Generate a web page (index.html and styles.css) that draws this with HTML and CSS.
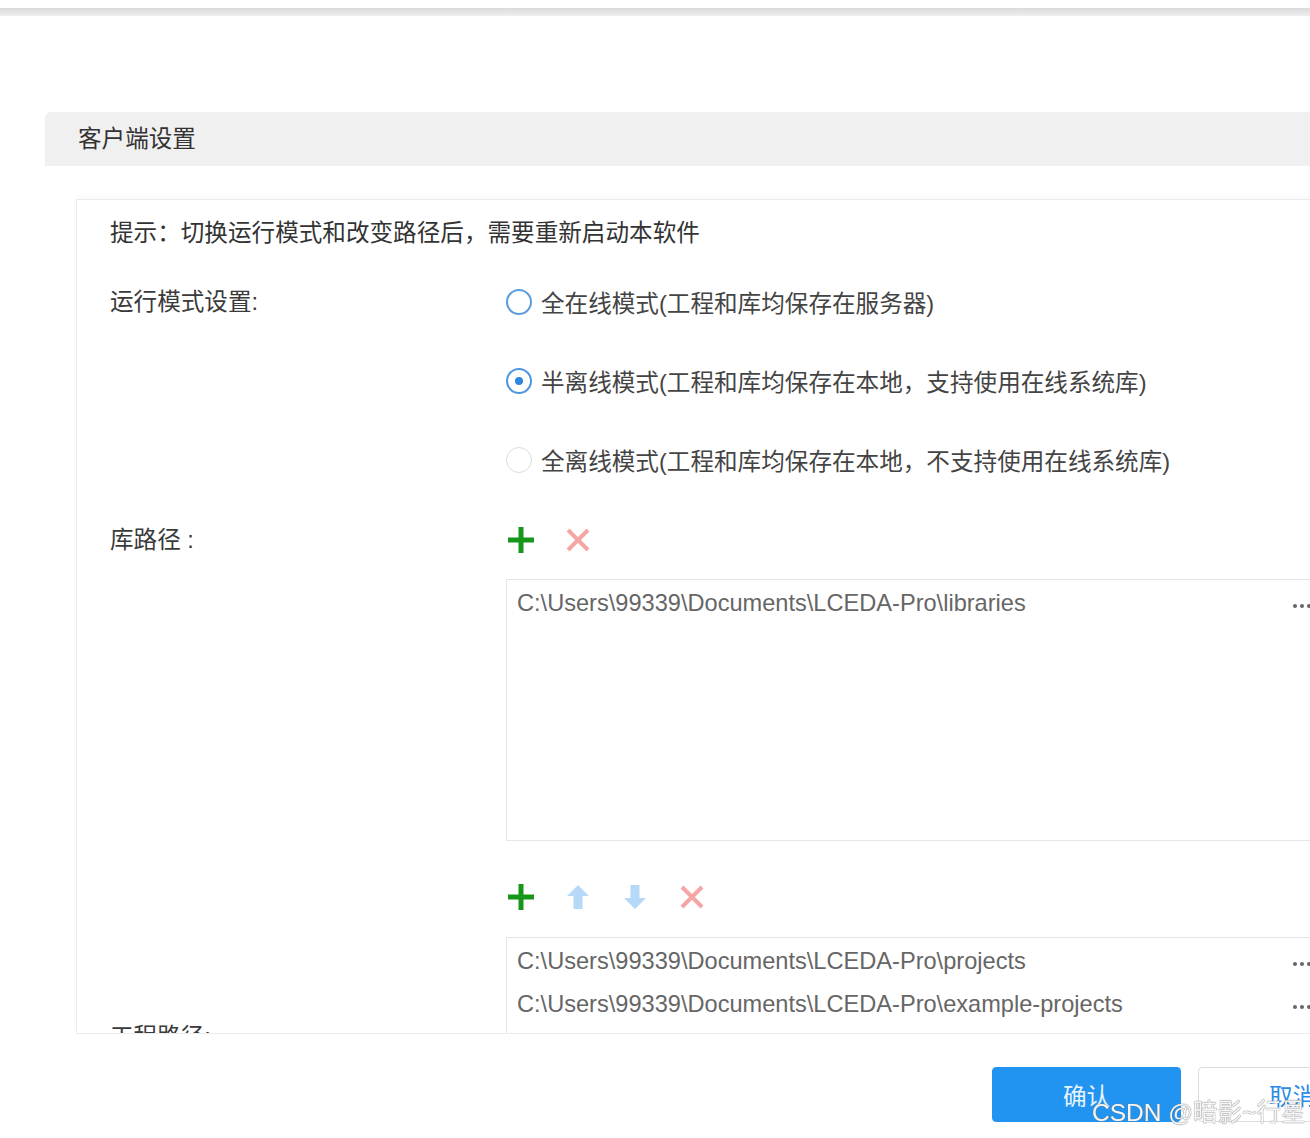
FILE: index.html
```html
<!DOCTYPE html>
<html lang="zh-CN">
<head>
<meta charset="utf-8">
<title>客户端设置</title>
<link rel="stylesheet" href="styles.css">
</head>
<body>
<div class="topbar"></div>

<div class="dialog">
  <div class="dialog-head">客户端设置</div>

  <div class="dialog-body">
    <div class="panel">
      <p class="hint">提示：切换运行模式和改变路径后，需要重新启动本软件</p>

      <div class="form-row row-mode">
        <div class="label">运行模式设置:</div>
        <div class="radios">
          <label class="radio"><span class="dot dot-hover"></span>全在线模式(工程和库均保存在服务器)</label>
          <label class="radio"><span class="dot dot-on"></span>半离线模式(工程和库均保存在本地，支持使用在线系统库)</label>
          <label class="radio"><span class="dot"></span>全离线模式(工程和库均保存在本地，不支持使用在线系统库)</label>
        </div>
      </div>

      <div class="form-row row-lib">
        <div class="label">库路径 :</div>
        <div>
          <div class="tools">
            <span class="tool"><svg width="28" height="28" viewBox="0 0 28 28"><path d="M14 1V27M1 14H27" stroke="#17961a" stroke-width="5"/></svg></span>
            <span class="tool"><svg width="28" height="28" viewBox="0 0 28 28"><path d="M4 4L24 24M24 4L4 24" stroke="#f5a5a5" stroke-width="4"/></svg></span>
          </div>
          <div class="paths paths-lib">
            <div class="path"><span>C:\Users\99339\Documents\LCEDA-Pro\libraries</span><span class="more"><i></i><i></i><i></i></span></div>
          </div>
        </div>
      </div>

      <div class="form-row row-proj">
        <div class="label label-proj">工程路径:</div>
        <div>
          <div class="tools">
            <span class="tool"><svg width="28" height="28" viewBox="0 0 28 28"><path d="M14 1V27M1 14H27" stroke="#17961a" stroke-width="5"/></svg></span>
            <span class="tool"><svg width="28" height="28" viewBox="0 0 28 28"><path d="M14 2L25 13H18.5V26H9.5V13H3Z" fill="#b6d9f8"/></svg></span>
            <span class="tool"><svg width="28" height="28" viewBox="0 0 28 28"><path d="M14 26L25 15H18.5V2H9.5V15H3Z" fill="#b6d9f8"/></svg></span>
            <span class="tool"><svg width="28" height="28" viewBox="0 0 28 28"><path d="M4 4L24 24M24 4L4 24" stroke="#f5a5a5" stroke-width="4"/></svg></span>
          </div>
          <div class="paths paths-proj">
            <div class="path"><span>C:\Users\99339\Documents\LCEDA-Pro\projects</span><span class="more"><i></i><i></i><i></i></span></div>
            <div class="path"><span>C:\Users\99339\Documents\LCEDA-Pro\example-projects</span><span class="more"><i></i><i></i><i></i></span></div>
          </div>
        </div>
      </div>
    </div>
  </div>

  <div class="dialog-foot">
    <button class="btn btn-ok">确认</button>
    <button class="btn btn-cancel">取消</button>
  </div>
</div>

<div class="watermark">CSDN @暗影~行星</div>
</body>
</html>
```

FILE: styles.css
```css
body {
	margin: 0;
	background-color: #fff;
	font-family: "Liberation Sans", "Noto Sans CJK SC", sans-serif;
	font-size: 23.6px;
	color: #333;
	overflow: hidden;
	}
.topbar {
	height: 8px;
	margin-top: 8px;
	background: linear-gradient(#dadada, #efefef);
	}
.dialog {
	width: 1400px;
	margin: 96px 0 0 45px;
	}
.dialog-head {
	height: 54px;
	line-height: 54px;
	padding-left: 33px;
	background-color: #f0f0f0;
	border-radius: 6px 0 0 0;
	color: #333;
	}
.dialog-body {
	padding: 33px 0 0 31px;
	}
.panel {
	box-sizing: border-box;
	height: 835px;
	overflow: hidden;
	padding-left: 33px;
	border: 1px solid #ececec;
	box-shadow: 0 -3px 5px rgba(0, 0, 0, 0.025);
	}
.hint {
	margin: 16px 0 0 0;
	line-height: 34px;
	}
.form-row {
	display: grid;
	grid-template-columns: 396px 1fr;
	}
.label {
	line-height: 34px;
	color: #3a3a3a;
	}
.row-mode {
	margin-top: 35px;
	}
.row-lib {
	margin-top: 46px;
	}
.row-proj {
	margin-top: 39px;
	}
.label-proj {
	padding-top: 140px;
	}
.radios {
	display: flex;
	flex-direction: column;
	gap: 45px;
	}
.radio {
	display: flex;
	align-items: center;
	gap: 9px;
	height: 34px;
	color: #444;
	}
.dot {
	box-sizing: border-box;
	width: 26px;
	height: 26px;
	border-radius: 50%;
	border: 1.5px solid #dadada;
	display: flex;
	align-items: center;
	justify-content: center;
	}
.dot-hover {
	border: 2px solid #5b9ce0;
	}
.dot-on {
	border: 2px solid #4d96e2;
	}
.dot-on::after {
	content: "";
	width: 8px;
	height: 8px;
	border-radius: 50%;
	background-color: #2f86e0;
	}
.tools {
	display: flex;
	gap: 29px;
	height: 34px;
	align-items: center;
	padding-left: 1px;
	}
.tool svg {
	display: block;
	}
.paths {
	box-sizing: border-box;
	width: 820px;
	margin-top: 22px;
	padding: 2px 0 0 10px;
	border: 1px solid #e6e6e6;
	color: #666;
	}
.paths-lib {
	height: 262px;
	}
.paths-proj {
	margin-top: 23px;
	height: 240px;
	}
.path {
	display: flex;
	justify-content: space-between;
	align-items: center;
	line-height: 43px;
	}
.more {
	display: flex;
	gap: 3px;
	width: 32px;
	padding-top: 4px;
	}
.more i {
	width: 4px;
	height: 4px;
	border-radius: 50%;
	background-color: #666;
	}
.dialog-foot {
	display: flex;
	gap: 17px;
	padding: 33px 0 0 947px;
	}
.btn {
	width: 189px;
	height: 55px;
	border-radius: 4px;
	font-family: "Liberation Sans", "Noto Sans CJK SC", sans-serif;
	font-size: 23.6px;
	}
.btn-ok {
	background-color: #2194f2;
	border: 1px solid #2194f2;
	color: #e8f3fd;
	}
.btn-cancel {
	background-color: #fff;
	border: 1px solid #dcdcdc;
	color: #2a8ce8;
	}
.watermark {
	position: fixed;
	left: 1092px;
	top: 1098px;
	font-size: 24.5px;
	line-height: 30px;
	color: #f6f6f6;
	text-shadow: 0 0 1px #777, 0 0 1px #777;
	white-space: nowrap;
	}
```
